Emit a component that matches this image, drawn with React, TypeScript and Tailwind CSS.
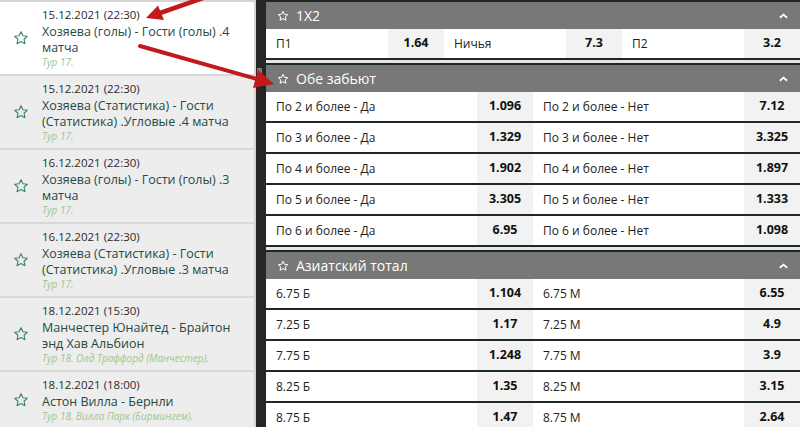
import React from "react";

const StarIcon = ({ className, sw = 2 }: { className?: string; sw?: number }) => (
  <svg viewBox="0 0 24 24" className={className} fill="none" stroke="currentColor" strokeWidth={sw} strokeLinejoin="round">
    <polygon points="12,2.5 14.9,8.6 21.5,9.4 16.6,13.9 17.9,20.5 12,17.2 6.1,20.5 7.4,13.9 2.5,9.4 9.1,8.6" />
  </svg>
);

type Ev = { date: string; title: string; sub: string; active?: boolean };

const events: Ev[] = [
  { date: "15.12.2021 (22:30)", title: "Хозяева (голы) - Гости (голы) .4 матча", sub: "Тур 17.", active: true },
  { date: "15.12.2021 (22:30)", title: "Хозяева (Статистика) - Гости (Статистика) .Угловые .4 матча", sub: "Тур 17." },
  { date: "16.12.2021 (22:30)", title: "Хозяева (голы) - Гости (голы) .3 матча", sub: "Тур 17." },
  { date: "16.12.2021 (22:30)", title: "Хозяева (Статистика) - Гости (Статистика) .Угловые .3 матча", sub: "Тур 17." },
  { date: "18.12.2021 (15:30)", title: "Манчестер Юнайтед - Брайтон энд Хав Альбион", sub: "Тур 18. Олд Траффорд (Манчестер)." },
  { date: "18.12.2021 (18:00)", title: "Астон Вилла - Бернли", sub: "Тур 18. Вилла Парк (Бирмингем)." },
];

type Cell = [string, string];

const Header = ({ title }: { title: string }) => (
  <div className="flex h-[27px] items-center bg-[#787878] pl-[11px] pr-[12px] text-white">
    <StarIcon className="h-[12px] w-[12px] text-white" />
    <span className="ml-[7px] flex-1 text-[14px] leading-none">{title}</span>
    <svg viewBox="0 0 10 6" className="h-[6px] w-[9px]" fill="none" stroke="white" strokeWidth={2}>
      <polyline points="1,5 5,1.5 9,5" />
    </svg>
  </div>
);

const Row = ({ cells }: { cells: Cell[] }) => (
  <div className="flex h-[31px] border-b-2 border-[#1d2924] bg-white">
    {cells.map(([label, odd], i) => (
      <div key={i} className="flex flex-1 items-center">
        <span className="flex-1 pl-[10px] text-[12px] text-[#222]">{label}</span>
        <span className="flex h-full w-[56px] items-center justify-center bg-[#f2f2f2] text-[12.5px] font-bold text-[#111]">
          {odd}
        </span>
      </div>
    ))}
  </div>
);

const Section = ({ title, rows }: { title: string; rows: Cell[][] }) => (
  <div>
    <Header title={title} />
    {rows.map((r, i) => (
      <Row key={i} cells={r} />
    ))}
    <div className="mb-[2px] h-[3px] bg-[#e4e4e4]" />
  </div>
);

export default function App() {
  return (
    <div
      className="relative flex h-[427px] w-[800px] overflow-hidden bg-[#262626]"
      style={{ fontFamily: '"Open Sans", "Noto Sans", sans-serif' }}
    >
      {/* left list */}
      <div className="w-[256px] shrink-0 border-r-2 border-t-2 border-[#d4d4d4] bg-[#ededed]">
        {events.map((e, i) => (
          <div
            key={i}
            className={`flex items-center border-b-2 border-[#d8d8d8] ${e.active ? "bg-white" : "bg-[#ededed]"}`}
          >
            <div className="flex w-[42px] shrink-0 justify-center">
              <StarIcon className="h-[16px] w-[16px] text-[#3f8574]" sw={1.7} />
            </div>
            <div className="min-w-0 flex-1 pb-[6px] pr-[6px] pt-[5px]">
              <div className="text-[11.5px] leading-[16px] text-[#2b2b2b]">{e.date}</div>
              <div className="mt-[1px] text-[12.5px] leading-[16px] text-[#264a3f]">{e.title}</div>
              <div className="mt-[1px] text-[10px] italic leading-[11px] text-[#a0c78b]">{e.sub}</div>
            </div>
          </div>
        ))}
      </div>

      {/* scroll strip */}
      <div className="w-[10px] shrink-0 bg-[#262626]">
        <div className="ml-[1px] mt-[68px] h-[11px] w-[5px] bg-[#7c7c7c]" />
      </div>

      {/* markets */}
      <div className="flex-1 bg-[#1d2924] pt-[2px]">
        <Section title="1X2" rows={[[["П1", "1.64"], ["Ничья", "7.3"], ["П2", "3.2"]]]} />
        <Section
          title="Обе забьют"
          rows={[
            [["По 2 и более - Да", "1.096"], ["По 2 и более - Нет", "7.12"]],
            [["По 3 и более - Да", "1.329"], ["По 3 и более - Нет", "3.325"]],
            [["По 4 и более - Да", "1.902"], ["По 4 и более - Нет", "1.897"]],
            [["По 5 и более - Да", "3.305"], ["По 5 и более - Нет", "1.333"]],
            [["По 6 и более - Да", "6.95"], ["По 6 и более - Нет", "1.098"]],
          ]}
        />
        <Section
          title="Азиатский тотал"
          rows={[
            [["6.75 Б", "1.104"], ["6.75 М", "6.55"]],
            [["7.25 Б", "1.17"], ["7.25 М", "4.9"]],
            [["7.75 Б", "1.248"], ["7.75 М", "3.9"]],
            [["8.25 Б", "1.35"], ["8.25 М", "3.15"]],
            [["8.75 Б", "1.47"], ["8.75 М", "2.64"]],
          ]}
        />
      </div>

      {/* red annotation arrows */}
      <svg className="pointer-events-none absolute left-0 top-0" width="800" height="427" viewBox="0 0 800 427">
        <line x1="206" y1="-3" x2="160" y2="13" stroke="#c2191c" strokeWidth="4.5" strokeLinecap="round" />
        <polygon points="146,18 158,5.5 164,20" fill="#c2191c" />
        <line x1="140" y1="46" x2="257" y2="79" stroke="#c2191c" strokeWidth="4" strokeLinecap="round" />
        <polygon points="274,84 258,70 253,88" fill="#c2191c" />
      </svg>
    </div>
  );
}
